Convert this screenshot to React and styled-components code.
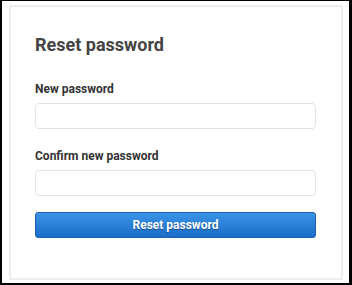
import React, { useState } from 'react'
import styled, { createGlobalStyle } from 'styled-components'

const GlobalStyle = createGlobalStyle`
  * { box-sizing: border-box; }
  body {
    margin: 0;
    font-family: Roboto, "Liberation Sans", Arial, sans-serif;
    background: #fff;
  }
`;

const Frame = styled.div`
  width: 352px;
  height: 285px;
  border-style: solid;
  border-color: #000;
  border-width: 1px 3px 2px 2px;
  background: #fff;
  padding: 4px 6px 3px 7px;
  display: flex;
`;

const Card = styled.form`
  flex: 1;
  display: flex;
  flex-direction: column;
  border: 2px solid #eeeeee;
  padding: 26px 25px 0 24px;
`;

const Title = styled.h2`
  margin: 0 0 24px;
  font-size: 18px;
  font-weight: 700;
  color: #444;
  line-height: 24px;
`;

const Field = styled.div`
  display: flex;
  flex-direction: column;
  margin-bottom: ${p => p.$gap || 16}px;
`;

const Label = styled.label`
  font-size: 12px;
  font-weight: 700;
  color: #333;
  line-height: 16px;
  margin-bottom: 6px;
`;

const Input = styled.input`
  height: 26px;
  border: 1px solid #e3e3e3;
  border-radius: 4px;
  padding: 0 8px;
  font-size: 12px;
  font-family: inherit;
  outline: none;
`;

const Button = styled.button`
  height: 26px;
  border: 1px solid #1b5fae;
  border-radius: 3px;
  background: linear-gradient(#3a94e6, #1b6cc7);
  color: #fff;
  font-family: inherit;
  font-size: 12px;
  font-weight: 700;
  text-shadow: 0 1px 1px rgba(0, 0, 0, 0.35);
  cursor: pointer;
`;

const App = () => {
  const [password, setPassword] = useState('')
  const [confirmPassword, setConfirmPassword] = useState('')

  return (
    <>
      <GlobalStyle />
      <Frame>
        <Card onSubmit={(e) => e.preventDefault()}>
          <Title>Reset password</Title>
          <Field $gap={19}>
            <Label>New password</Label>
            <Input
              type="password"
              value={password}
              onChange={(e) => setPassword(e.target.value)}
            />
          </Field>
          <Field $gap={16}>
            <Label>Confirm new password</Label>
            <Input
              type="password"
              value={confirmPassword}
              onChange={(e) => setConfirmPassword(e.target.value)}
            />
          </Field>
          <Button type="submit">Reset password</Button>
        </Card>
      </Frame>
    </>
  )
}

export default App
